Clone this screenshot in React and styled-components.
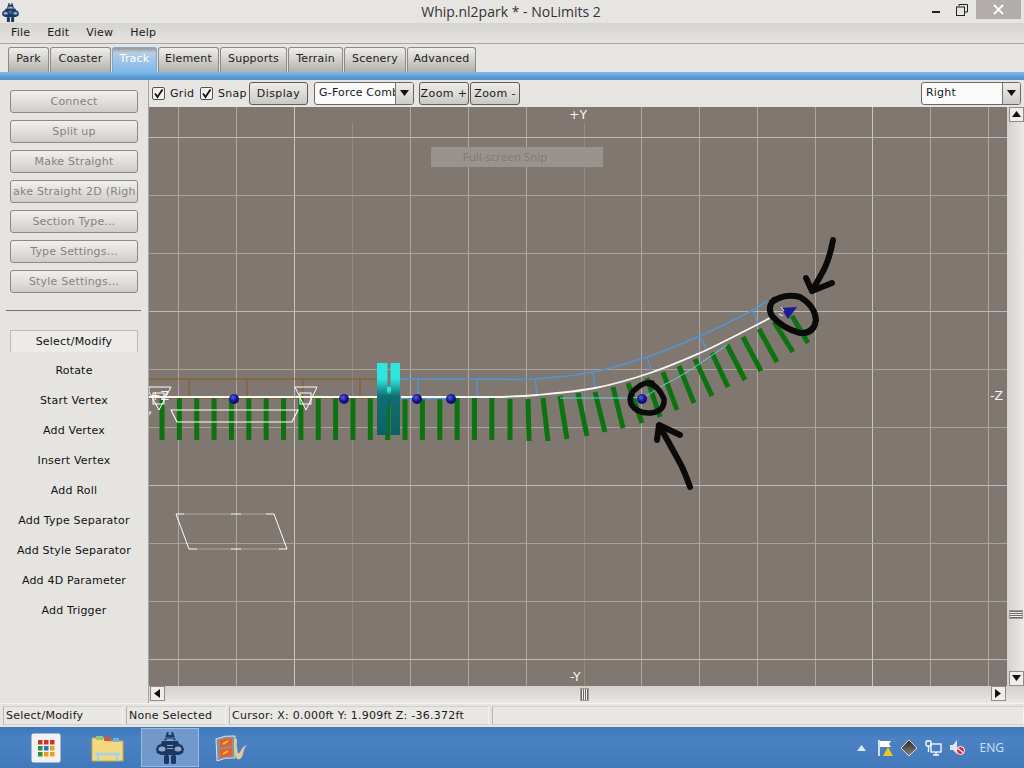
import React from 'react';
import styled, { createGlobalStyle } from 'styled-components';

const Global = createGlobalStyle`
  html, body { margin: 0; padding: 0; background: #e6e4e1; }
  body { font-family: "DejaVu Sans", sans-serif; font-size: 11px; letter-spacing: .2px; color: #1a1a1a; overflow: hidden; }
`;

const Window = styled.div`width: 1024px; height: 768px; display: flex; flex-direction: column; overflow: hidden; background: #e6e4e1;`;
const TitleBar = styled.div`height: 23px; flex: none; display: flex; align-items: flex-start; background: #e7e5e2;`;
const TitleIcon = styled.div`width: 20px; height: 23px; padding: 3px 0 0 2px; box-sizing: border-box; flex: none;`;
const TitleText = styled.div`flex: 1; text-align: center; font: 14px/23px "Open Sans", sans-serif; letter-spacing: 0; color: #333; padding-left: 78px;`;
const WinControls = styled.div`display: flex; flex: none; margin-right: 3px; height: 19px;`;
const WinBtn = styled.div`width: ${p => p.$w}px; height: 19px; display: flex; align-items: center; justify-content: center; background: ${p => p.$bg || 'transparent'};`;

const MenuBar = styled.div`height: 21px; flex: none; display: flex; align-items: center; gap: 17px; padding: 0 0 1px 11px; box-sizing: border-box; background: linear-gradient(#d6d4d1, #e6e4e1); border-bottom: 1px solid #a9a5a0;`;
const TabStrip = styled.div`height: 28px; flex: none; display: flex; align-items: flex-end; padding-left: 8px; box-sizing: border-box; background: #e7e5e2;`;
const Tab = styled.div`height: 25px; width: ${p => p.$w}px; flex: none; box-sizing: border-box; padding-bottom: 4px; margin-right: 1px; display: flex; align-items: center; justify-content: center; border: 1px solid ${p => p.$on ? '#7aa9d4' : '#8e8a85'}; border-bottom: 0; border-radius: 3px 3px 0 0; background: ${p => p.$on ? 'linear-gradient(#9a9793, #b7cde4 20%, #7db8ea)' : 'linear-gradient(#f0eeec, #b4b1ac)'}; color: ${p => p.$on ? '#fff' : '#222'};`;
const BlueStrip = styled.div`height: 8px; flex: none; background: linear-gradient(#7fb9ea, #4c93d6 85%, #7c8a98);`;

const Main = styled.div`flex: 1; display: flex; min-height: 0;`;
const SidePanel = styled.div`width: 149px; flex: none; border-right: 1px solid #a8a5a0; box-sizing: border-box; display: flex; flex-direction: column; align-items: flex-start; padding: 10px 0 0 10px;`;
const ActionBtn = styled.div`width: 128px; height: 23px; flex: none; box-sizing: border-box; margin-bottom: 7px; display: flex; align-items: center; justify-content: center; border: 1px solid #8d8a86; border-radius: 3px; background: linear-gradient(#f2f0ee, #d0cdc9); color: #85827e;`;
const ActionLabel = styled.span`width: 122px; flex: none; display: flex; justify-content: center; white-space: nowrap; overflow: hidden;`;
const Separator = styled.div`width: 135px; height: 1px; flex: none; background: #77746f; margin: 10px 0 19px -4px;`;
const ToolBtn = styled.div`width: 128px; height: ${p => p.$sel ? 22 : 23}px; flex: none; box-sizing: border-box; margin-bottom: 7px; display: flex; align-items: center; justify-content: center; color: #111; ${p => p.$sel ? 'border: 1px solid #bdbab5; border-bottom: 0; background: #ecebe8;' : ''}`;

const Work = styled.div`flex: 1; display: flex; flex-direction: column; min-width: 0;`;
const Toolbar = styled.div`height: 27px; flex: none; display: flex; align-items: center; padding: 0 3px 1px 3px; box-sizing: border-box; background: #e7e5e2;`;
const Check = styled.div`width: 13px; height: 13px; flex: none; box-sizing: border-box; border: 1px solid #55524f; background: #f4f3f1; display: flex; align-items: center; justify-content: center; border-radius: 2px;`;
const CheckLabel = styled.span`margin: 0 5px; letter-spacing: .3px; width: ${p => p.$w}px;`;
const SmallBtn = styled.div`height: 23px; width: ${p => p.$w}px; margin-left: ${p => p.$ml || 0}px; flex: none; box-sizing: border-box; border: 1px solid #5f5c58; border-radius: 3px; background: linear-gradient(#efedeb, #cbc8c4); display: flex; align-items: center; justify-content: center; letter-spacing: .4px; white-space: nowrap;`;
const Combo = styled.div`height: 23px; width: ${p => p.$w}px; margin-left: ${p => p.$ml}; flex: none; box-sizing: border-box; border: 1px solid #6c6965; border-radius: 3px; background: #fbfafa; display: flex; overflow: hidden;`;
const ComboText = styled.div`flex: 1; min-width: 0; padding: 2px 0 0 4px; overflow: hidden; white-space: nowrap; letter-spacing: .2px; line-height: 16px;`;
const ComboArrow = styled.div`width: 17px; flex: none; border-left: 1px solid #77746f; background: linear-gradient(#efedeb, #cfccc8); display: flex; align-items: center; justify-content: center;`;

const ViewRow = styled.div`flex: 1; display: flex; min-height: 0;`;
const Canvas = styled.div`width: 858px; height: 579px; flex: none; position: relative; background: #807770; overflow: hidden;`;
const CanvasSvg = styled.svg`display: block;`;
const AxisLabel = styled.span`position: absolute; left: ${p => p.$x}px; top: ${p => p.$y}px; color: #f6f5f3; font-size: 12.5px; letter-spacing: 0; line-height: 14px;`;
const Snip = styled.div`position: absolute; left: 282px; top: 40px; width: 172px; height: 20px; background: #99938e; color: #7f7872; font: 11.5px/20px "Open Sans", sans-serif; letter-spacing: 0; text-align: center; padding-right: 24px; box-sizing: border-box;`;

const VScroll = styled.div`flex: 1; position: relative; background: linear-gradient(90deg, #d4d2ce, #ebe9e6); display: flex; flex-direction: column; justify-content: space-between; align-items: center; padding-left: 1px;`;
const ArrowBtn = styled.div`width: 15px; height: 15px; flex: none; box-sizing: border-box; border: 1px solid #8f8c88; background: #efeeeb; display: flex; align-items: center; justify-content: center;`;
const VThumb = styled.div`position: absolute; left: 2px; top: 503px; width: 14px; height: 9px; border: 1px solid #a09d98; box-sizing: border-box; background: repeating-linear-gradient(#6a6865 0 1px, #f2f1ef 1px 2px);`;
const HScroll = styled.div`height: 17px; flex: none; position: relative; display: flex; justify-content: space-between; padding: 0 18px 2px 1px; box-sizing: border-box; background: linear-gradient(#d2d0cc, #ebe9e6);`;
const HThumb = styled.div`position: absolute; left: 431px; top: 2px; width: 9px; height: 13px; border: 1px solid #a09d98; box-sizing: border-box; background: repeating-linear-gradient(90deg, #6a6865 0 1px, #f2f1ef 1px 2px);`;

const StatusBar = styled.div`height: 24px; flex: none; box-sizing: border-box; padding: 2px 0 2px 3px; display: flex; gap: 3px; background: #e6e4e1; border-top: 1px solid #f5f4f2;`;
const StatusCell = styled.div`width: ${p => p.$w ? p.$w + 'px' : 'auto'}; flex: ${p => p.$w ? 'none' : 1}; box-sizing: border-box; padding: 0 2px; letter-spacing: .25px; line-height: 17px; border: 1px solid #d2cfcb; border-left-color: #b8b5b0; border-right-color: #f3f2f0; background: #e9e7e4; white-space: nowrap; overflow: hidden;`;

const Taskbar = styled.div`height: 41px; flex: none; display: flex; align-items: center; background: linear-gradient(#3f78bb, #4a82c4 30%, #4279bb);`;
const TaskSlot = styled.div`width: 58px; height: 39px; flex: none; display: flex; align-items: center; justify-content: center; box-sizing: border-box; margin-left: ${p => p.$ml || 0}px; ${p => p.$on ? 'background: #7199c9; border: 1px solid #9bbbe0;' : ''}`;
const Tray = styled.div`margin-left: auto; display: flex; align-items: center; gap: 7px; padding-right: 20px;`;
const TrayIcon = styled.div`width: 17px; height: 20px; display: flex; align-items: center; justify-content: center;`;
const Lang = styled.div`color: #cfe0f2; font: 12px "Open Sans", sans-serif; letter-spacing: 0; margin-left: 7px;`;

const Robot = ({ size = 24, color = '#1b3763' }) => (
  <svg width={size} height={size * 32 / 28} viewBox="0 0 28 32">
    <path d="M11 0h1.500v3h3V0H17l3 9h-2l-1-2h-6l-1 2H8z" fill={color} />
    <path d="M9 6h10M8 8.500h12" stroke="#8fa9cc" strokeWidth=".7" />
    <path d="M6 9h16l1 3 3 1 2 4-1 4-4 2H5l-4-2-1-4 2-4 3-1z" fill={color} />
    <ellipse cx="6" cy="17" rx="3.500" ry="2.500" fill="#8fa9cc" />
    <ellipse cx="22" cy="17" rx="3.500" ry="2.500" fill="#8fa9cc" />
    <rect x="11" y="13" width="6" height="1" fill="#8fa9cc" />
    <rect x="11" y="16" width="6" height="1" fill="#8fa9cc" />
    <rect x="8" y="23" width="5" height="9" rx="1.500" fill={color} />
    <rect x="15" y="23" width="5" height="9" rx="1.500" fill={color} />
  </svg>
);

const Caret = ({ dir = 'down', size = 9 }) => {
  const pts = { down: '0,1 9,1 4.500,7', up: '0,7 9,7 4.500,1', left: '7,0 7,9 1,4.500', right: '1,0 1,9 7,4.500' }[dir];
  return <svg width={size} height={size} viewBox="0 0 9 9"><polygon points={pts} fill="#111" /></svg>;
};

const tick = <svg width="11" height="11" viewBox="0 0 11 11"><path d="M2 5.500 4.500 9 9.500 1.500" fill="none" stroke="#111" strokeWidth="1.800" /></svg>;

// Catmull-Rom spline through points, as an SVG path
const spline = pts => {
  let d = `M${pts[0][0]} ${pts[0][1]}`;
  for (let i = 0; i < pts.length - 1; i++) {
    const p0 = pts[i - 1] || pts[i], p1 = pts[i], p2 = pts[i + 1], p3 = pts[i + 2] || p2;
    const c1 = [p1[0] + (p2[0] - p0[0]) / 6, p1[1] + (p2[1] - p0[1]) / 6];
    const c2 = [p2[0] - (p3[0] - p1[0]) / 6, p2[1] - (p3[1] - p1[1]) / 6];
    d += ` C${c1[0]} ${c1[1]} ${c2[0]} ${c2[1]} ${p2[0]} ${p2[1]}`;
  }
  return d;
};

const OX = 149, OY = 107;
const gridV = [178, 236, 294, 352, 410, 468, 526, 584, 641, 699, 757, 815, 872, 930, 988];
const gridH = [137, 195, 253, 311, 369, 427, 485, 543, 601, 659];
const majorV = new Set([294, 872]);
const faintV = new Set([352, 584]);
const majorH = new Set([137, 311, 485, 659]);
const straightBars = Array.from({ length: 20 }, (_, i) => 162 + i * 17.36);
const curvedBars = [
  [510, 399, 510, 440], [528, 399, 529, 441], [543, 398, 548, 441], [560, 396, 567, 439], [578, 393, 587, 436],
  [595, 392, 605, 432], [613, 387, 623, 428], [628, 383, 642, 423], [647, 378, 660, 417], [663, 372, 677, 410],
  [679, 366, 694, 403], [695, 359, 712, 396], [712, 353, 728, 387], [727, 345, 745, 380], [743, 337, 761, 371],
  [759, 329, 777, 362], [774, 322, 793, 352], [792, 316, 808, 343],
];
const balls = [[234, 399], [344, 399], [417, 399], [451, 399], [642, 399]];
const brownV = [189, 247, 303, 360];
const blueConn = [[418, 379, 418, 398], [477, 379, 477, 398], [535, 379, 537, 395], [593, 372, 595, 388], [647, 357, 652, 373], [700, 336, 707, 351], [753, 310, 758, 325]];
const whiteCurve = spline([[500, 397], [537, 395], [595, 388], [650, 373], [700, 353], [733, 337], [770, 318]]);
const blueCurve = spline([[500, 379], [535, 379], [593, 372], [647, 357], [700, 336], [753, 310], [767, 301]]);
const cyanCurve = spline([[627, 398], [645, 396], [660, 387], [687, 372], [727, 345]]);

const Scene = () => (
  <CanvasSvg width="858" height="579" viewBox={`${OX} ${OY} 858 579`}>
    <defs>
      <linearGradient id="tower" x1="0" y1="0" x2="0" y2="1">
        <stop offset="0" stopColor="#2ee6e0" />
        <stop offset=".22" stopColor="#2ee6e0" />
        <stop offset=".46" stopColor="#0f6f70" />
        <stop offset="1" stopColor="#0c6266" />
      </linearGradient>
      <radialGradient id="ball" cx=".4" cy=".35" r=".7">
        <stop offset="0" stopColor="#5a5ae8" />
        <stop offset=".55" stopColor="#15158e" />
        <stop offset="1" stopColor="#0a0a50" />
      </radialGradient>
    </defs>
    {gridV.map(x => <line key={x} x1={x + .5} x2={x + .5} y1={faintV.has(x) ? 123 : 107} y2={686} stroke={majorV.has(x) ? '#c9c5c0' : faintV.has(x) ? '#918b85' : '#aca7a1'} strokeWidth="1" />)}
    {gridH.map(y => <line key={y} y1={y + .5} y2={y + .5} x1={149} x2={1007} stroke={majorH.has(y) ? '#bdb9b4' : '#a8a39d'} strokeWidth="1" />)}

    {straightBars.map(x => <rect key={x} x={x - 2.500} y={398} width={5} height={42} fill="#0b730f" />)}
    {curvedBars.map((b, i) => <line key={i} x1={b[0]} y1={b[1]} x2={b[2]} y2={b[3]} stroke="#0b730f" strokeWidth="5" />)}

    <path d="M149 379 H377 M149 398 H377" fill="none" stroke="#8a5a1c" strokeWidth="1.200" />
    {brownV.map(x => <line key={x} x1={x} x2={x} y1={379} y2={398} stroke="#8a5a1c" strokeWidth="1" />)}

    <path d={`M400 379 H500 ${blueCurve.slice(blueCurve.indexOf('C'))}`} fill="none" stroke="#5295d6" strokeWidth="1.600" />
    <line x1="400" x2="450" y1="398.500" y2="398.500" stroke="#5295d6" strokeWidth="1.300" />
    {blueConn.map((b, i) => <line key={i} x1={b[0]} y1={b[1]} x2={b[2]} y2={b[3]} stroke="#5295d6" strokeWidth="1.400" />)}
    <path d="M560 398 H627" fill="none" stroke="#62d4d2" strokeWidth="1" />
    <path d={cyanCurve} fill="none" stroke="#62d4d2" strokeWidth="1" />

    <path d={`M149 397 H377 M401 397 H500 ${whiteCurve.slice(whiteCurve.indexOf('C'))}`} fill="none" stroke="#f6f6f4" strokeWidth="1.800" />

    <g fill="none" stroke="#fff" strokeWidth="1">
      <polygon points="149,387 171,387 159,410 149,392" />
      <polygon points="295,387 317,387 306,410" />
      <rect x="300" y="393" width="11" height="11" />
      <rect x="153" y="393" width="11" height="11" />
      <path d="M171 410 H298 L292 422 H177 Z" strokeWidth="1.100" />
      <path d="M149 412 H151 L149 415" />
      <path d="M176 514 L189 549 M274 514 L287 549 M176 514 H184 M266 514 H274 M189 549 H197 M279 549 H287 M231 514 H241 M231 549 H241" />
      <path d="M184 514 H231 M241 514 H266 M197 549 H231 M241 549 H279" stroke="#aaa5a0" />
    </g>

    <rect x="377" y="363" width="10.500" height="72" fill="url(#tower)" />
    <rect x="390.500" y="363" width="9.500" height="72" fill="url(#tower)" />
    <rect x="387" y="387" width="4" height="18" fill="url(#tower)" />

    {balls.map(([x, y]) => <circle key={x} cx={x} cy={y} r="5" fill="url(#ball)" />)}
    <polygon points="781,308 797,307 788,319" fill="#1a1a96" />
    <path d="M781 307 L784 311 M779 314 L783 316" stroke="#d8d8f0" strokeWidth="1.200" />

    <g fill="none" stroke="#0a0a0a" strokeLinecap="round" strokeLinejoin="round">
      <path d="M648 383 Q659 386 664 399 Q665 411 651 413 Q637 414 631 404 Q628 394 637 388 Q644 382 652 383" strokeWidth="5.500" />
      <path d="M772 302 Q784 293 800 297 Q815 306 816 320 Q814 334 800 333 Q782 328 772 316 Q767 307 774 300" strokeWidth="6" />
      <path d="M690 487 Q684 470 680 463 L669 443 L659 425 M659 425 L657 440 M659 425 L680 435" strokeWidth="6" />
      <path d="M833 240 Q829 262 821 275 L812 291 M812 291 L806 278 M812 291 L832 283" strokeWidth="6" />
    </g>
  </CanvasSvg>
);

const actions = ['Connect', 'Split up', 'Make Straight', 'Make Straight 2D (Right)', 'Section Type...', 'Type Settings...', 'Style Settings...'];
const tools = ['Select/Modify', 'Rotate', 'Start Vertex', 'Add Vertex', 'Insert Vertex', 'Add Roll', 'Add Type Separator', 'Add Style Separator', 'Add 4D Parameter', 'Add Trigger'];
const tabs = [['Park', 41], ['Coaster', 61], ['Track', 45], ['Element', 61], ['Supports', 67], ['Terrain', 55], ['Scenery', 62], ['Advanced', 69]];

export default function App() {
  return (
    <Window>
      <Global />
      <TitleBar>
        <TitleIcon><Robot size={17} /></TitleIcon>
        <TitleText>Whip.nl2park * - NoLimits 2</TitleText>
        <WinControls>
          <WinBtn $w={24}><svg width="10" height="10" viewBox="0 0 10 10"><rect x="1" y="6" width="8" height="2" fill="#222" /></svg></WinBtn>
          <WinBtn $w={28}><svg width="12" height="12" viewBox="0 0 12 12"><path d="M3 2.500V.5h8.500V8H9" fill="none" stroke="#222" /><rect x=".5" y="3" width="8" height="8.500" fill="none" stroke="#222" /></svg></WinBtn>
          <WinBtn $w={45} $bg="#b2adaa"><svg width="11" height="11" viewBox="0 0 11 11"><path d="M1 1 10 10M10 1 1 10" stroke="#fff" strokeWidth="1.800" /></svg></WinBtn>
        </WinControls>
      </TitleBar>
      <MenuBar>
        <span>File</span><span>Edit</span><span>View</span><span>Help</span>
      </MenuBar>
      <TabStrip>
        {tabs.map(([t, w]) => <Tab key={t} $w={w} $on={t === 'Track'}>{t}</Tab>)}
      </TabStrip>
      <BlueStrip />
      <Main>
        <SidePanel>
          {actions.map(a => <ActionBtn key={a}><ActionLabel>{a}</ActionLabel></ActionBtn>)}
          <Separator />
          {tools.map((t, i) => <ToolBtn key={t} $sel={i === 0}>{t}</ToolBtn>)}
        </SidePanel>
        <Work>
          <Toolbar>
            <Check>{tick}</Check><CheckLabel $w={25}>Grid</CheckLabel>
            <Check>{tick}</Check><CheckLabel $w={26}>Snap</CheckLabel>
            <SmallBtn $w={59}>Display</SmallBtn>
            <Combo $w={100} $ml="6px"><ComboText>G-Force Combo</ComboText><ComboArrow><Caret /></ComboArrow></Combo>
            <SmallBtn $w={50} $ml={5}>Zoom +</SmallBtn>
            <SmallBtn $w={50} $ml={1}>Zoom -</SmallBtn>
            <Combo $w={100} $ml="auto"><ComboText>Right</ComboText><ComboArrow><Caret /></ComboArrow></Combo>
          </Toolbar>
          <ViewRow>
            <Canvas>
              <Scene />
              <AxisLabel $x={420} $y={1}>+Y</AxisLabel>
              <AxisLabel $x={421} $y={563}>-Y</AxisLabel>
              <AxisLabel $x={841} $y={282}>-Z</AxisLabel>
              <AxisLabel $x={1} $y={282}>+Z</AxisLabel>
              <Snip>Full-screen Snip</Snip>
            </Canvas>
            <VScroll>
              <ArrowBtn><Caret dir="up" /></ArrowBtn>
              <VThumb />
              <ArrowBtn><Caret dir="down" /></ArrowBtn>
            </VScroll>
          </ViewRow>
          <HScroll>
            <ArrowBtn><Caret dir="left" /></ArrowBtn>
            <HThumb />
            <ArrowBtn><Caret dir="right" /></ArrowBtn>
          </HScroll>
        </Work>
      </Main>
      <StatusBar>
        <StatusCell $w={120}>Select/Modify</StatusCell>
        <StatusCell $w={100}>None Selected</StatusCell>
        <StatusCell $w={260}>Cursor: X: 0.000ft Y: 1.909ft Z: -36.372ft</StatusCell>
        <StatusCell />
      </StatusBar>
      <Taskbar>
        <TaskSlot $ml={17}>
          <svg width="30" height="30" viewBox="0 0 30 30">
            <rect x="0.500" y="0.500" width="29" height="29" rx="2" fill="#f3f2f0" />
            {[['#c8342c', '#c8342c', '#c8342c'], ['#2e8f42', '#2f6fc0', '#e8a11e'], ['#2e8f42', '#e8a11e', '#e8a11e']].map((row, r) => row.map((c, i) => <rect key={`${r}${i}`} x={7 + i * 6} y={7 + r * 6} width="4.500" height="4.500" fill={c} />))}
          </svg>
        </TaskSlot>
        <TaskSlot $ml={3}>
          <svg width="33" height="28" viewBox="0 0 33 28">
            <path d="M1 4h12l3 3h16v20H1z" fill="#f2d87e" stroke="#c9a94f" />
            <rect x="5" y="2" width="7" height="4" fill="#8ecb6a" /><rect x="13" y="3" width="7" height="4" fill="#d8553a" /><rect x="22" y="4" width="6" height="4" fill="#6cb4e0" />
            <path d="M7 27v-7h19v7M4 20h25" fill="none" stroke="#9fd4ee" strokeWidth="2.500" />
          </svg>
        </TaskSlot>
        <TaskSlot $on $ml={5}><Robot size={28} /></TaskSlot>
        <TaskSlot $ml={3}>
          <svg width="33" height="28" viewBox="0 0 33 28">
            <path d="M1 5 Q10 1 20 2 L20 24 Q10 23 2 27z" fill="#8a8f9a" stroke="#dfe4ea" strokeWidth="1" />
            <path d="M5 6 Q11 4 17 4.500 L17 12 Q11 12 5 14z M5 16 Q11 14 17 14 L17 22 Q11 22 5 24z" fill="#e4622a" />
            <path d="M8 10l5-3M8 20l5-3" stroke="#f7c04a" strokeWidth="1.500" />
            <path d="M19 5 Q18 20 22 25 Q26 27 28 20 Q29 14 32 11 Q28 12 26 16 Q25 20 23 19 Q21 12 22 5z" fill="#dccaa0" />
          </svg>
        </TaskSlot>
        <Tray>
          <TrayIcon><svg width="9" height="6" viewBox="0 0 9 6"><polygon points="0,6 9,6 4.500,0" fill="#dce8f5" /></svg></TrayIcon>
          <TrayIcon><svg width="17" height="18" viewBox="0 0 17 18"><path d="M2 1v16" stroke="#fff" strokeWidth="1.500" /><path d="M3 2h11l-2 3 2 3H3z" fill="#fff" /><polygon points="11,8 16,17 6,17" fill="#f0c428" /></svg></TrayIcon>
          <TrayIcon><svg width="16" height="16" viewBox="0 0 16 16"><defs><linearGradient id="dia" x1="0" y1="0" x2="0" y2="1"><stop offset="0" stopColor="#2e2a28" /><stop offset="1" stopColor="#8a8078" /></linearGradient></defs><polygon points="8,0 16,8 8,16 0,8" fill="url(#dia)" stroke="#d8d4d0" /></svg></TrayIcon>
          <TrayIcon><svg width="17" height="16" viewBox="0 0 17 16"><rect x="1" y="1" width="5" height="5" rx="1" fill="none" stroke="#fff" strokeWidth="1.300" /><rect x="6" y="4" width="10" height="8" fill="none" stroke="#fff" strokeWidth="1.300" /><path d="M3.500 6v6M8 15h6M11 12v3" stroke="#fff" strokeWidth="1.300" /></svg></TrayIcon>
          <TrayIcon><svg width="16" height="17" viewBox="0 0 16 17"><path d="M1 6h3l4-5v14l-4-4H1z" fill="#dfe7f0" /><circle cx="11.500" cy="11.500" r="4" fill="#d8243a" stroke="#fff" /><path d="M9 9.500 14 13.500" stroke="#fff" strokeWidth="1.300" /></svg></TrayIcon>
          <Lang>ENG</Lang>
        </Tray>
      </Taskbar>
    </Window>
  );
}
